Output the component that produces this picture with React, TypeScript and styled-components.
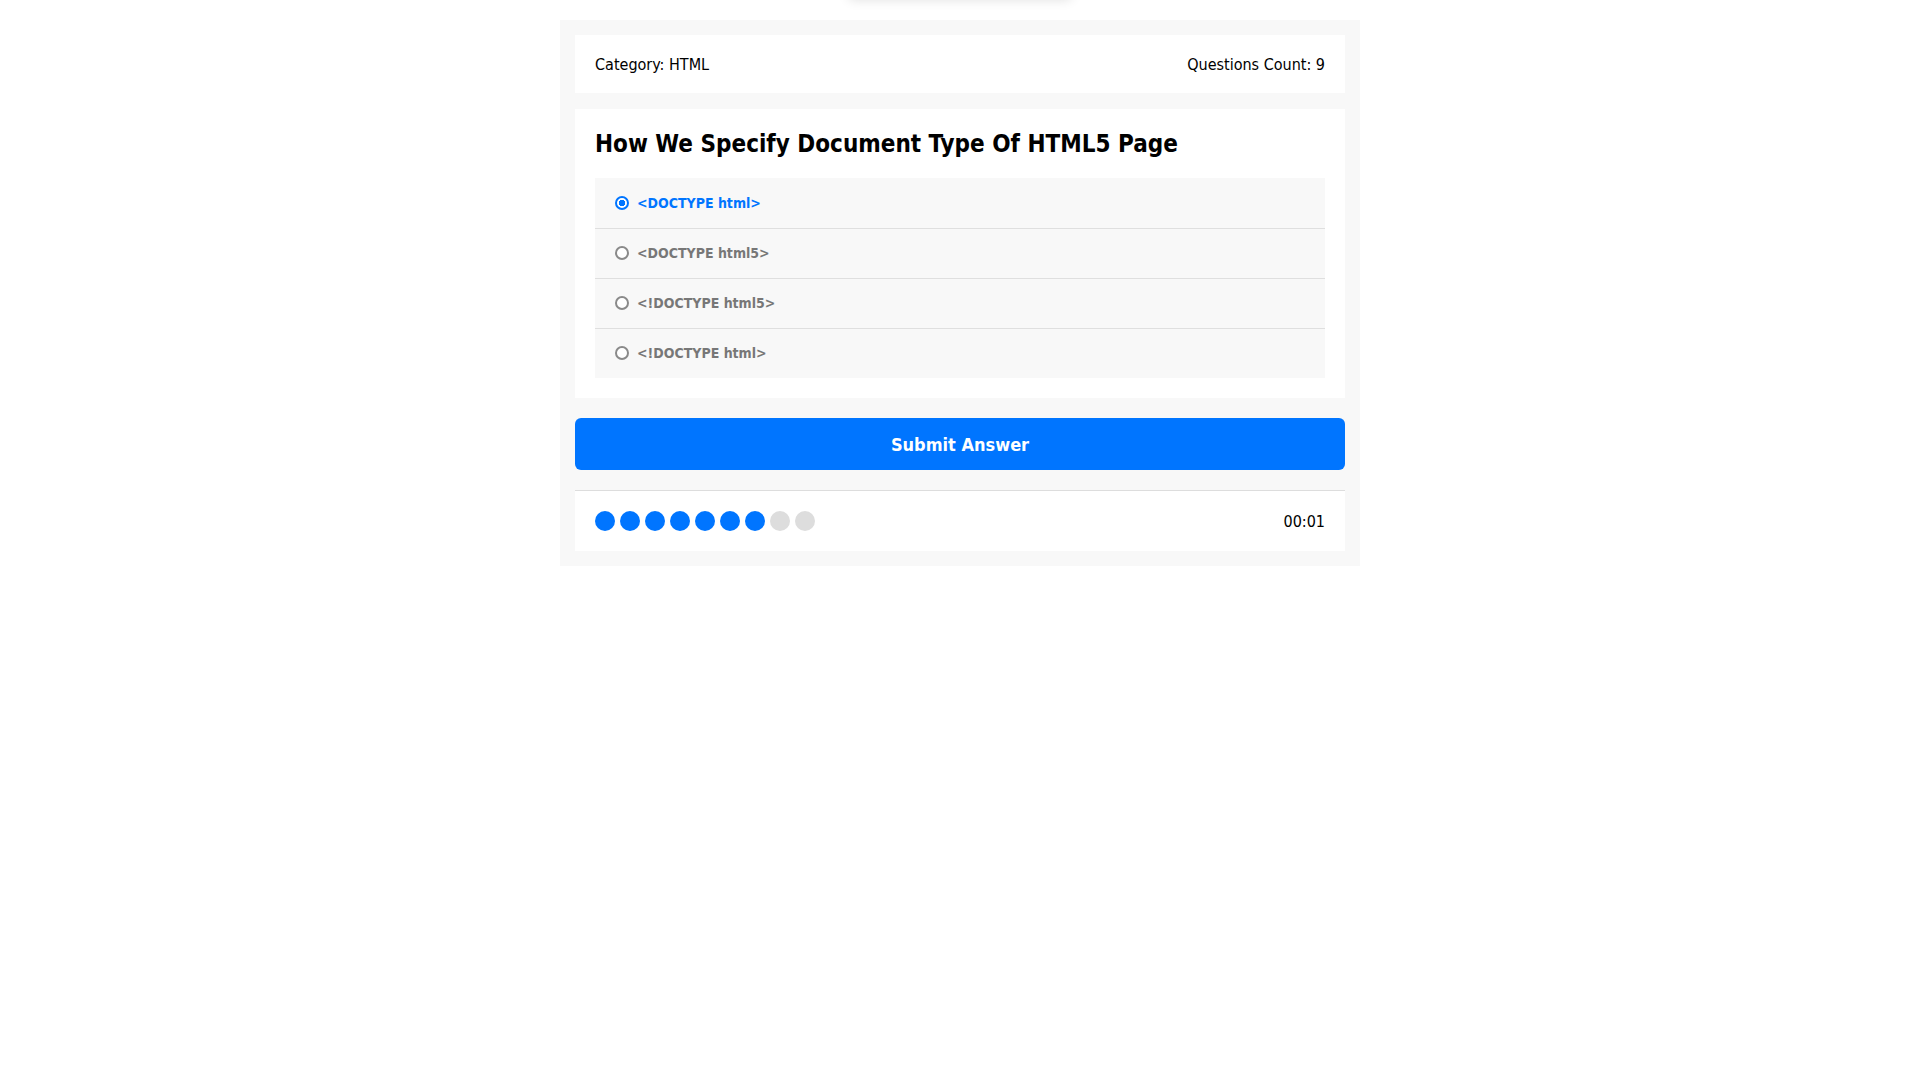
import React from "react";
import styled, { createGlobalStyle } from "styled-components";

const Global = createGlobalStyle`
  * { box-sizing: border-box; }
  body {
    margin: 0;
    background: #ffffff;
    font-family: "DejaVu Sans Condensed", "DejaVu Sans", Tahoma, sans-serif;
  }
`;

const Toast = styled.div`
  position: fixed;
  top: -60px;
  left: 50%;
  transform: translateX(-50%);
  width: 224px;
  height: 60px;
  background: #fff;
  border-radius: 6px;
  box-shadow: 0 0 12px rgba(0, 0, 0, 0.12);
`;

const Container = styled.div`
  width: 800px;
  margin: 20px auto 0;
  background: #f8f8f8;
  padding: 15px;
  display: flex;
  flex-direction: column;
`;

const InfoBar = styled.div`
  background: #fff;
  padding: 21px 20px 19px;
  display: flex;
  justify-content: space-between;
  align-items: center;
  font-size: 16px;
  line-height: 18px;
  color: #000;
`;

const QuestionCard = styled.div`
  background: #fff;
  padding: 20px;
  margin-top: 16px;
`;

const Title = styled.h2`
  margin: 0 0 20px;
  padding-top: 1px;
  font-size: 24px;
  line-height: 28px;
  font-weight: bold;
  color: #000;
`;

const Options = styled.div`
  background: #f8f8f8;
  display: flex;
  flex-direction: column;
`;

const Option = styled.label<{ $checked?: boolean; $first?: boolean }>`
  display: flex;
  align-items: center;
  height: 50px;
  padding: 0 20px 1px;
  font-size: 14px;
  font-weight: bold;
  color: ${(p) => (p.$checked ? "#0075ff" : "#777")};
  border-top: 1px solid ${(p) => (p.$first ? "transparent" : "#dfdfdf")};
  cursor: pointer;
`;

const Radio = styled.input`
  appearance: none;
  margin: 0 8px 0 0;
  width: 14px;
  height: 14px;
  border-radius: 50%;
  border: 2px solid #8a8a8a;
  background: #fff;
  flex-shrink: 0;
  &:checked {
    border-color: #0075ff;
    background: radial-gradient(circle, #0075ff 0 3px, #fff 3.5px);
  }
`;

const SubmitButton = styled.button`
  margin-top: 20px;
  height: 52px;
  width: 100%;
  border: none;
  border-radius: 6px;
  background: #0075ff;
  color: #fff;
  font-family: inherit;
  font-size: 18px;
  font-weight: bold;
  cursor: pointer;
`;

const BottomBar = styled.div`
  margin-top: 20px;
  background: #fff;
  border-top: 1px solid #ddd;
  padding: 20px;
  display: flex;
  justify-content: space-between;
  align-items: center;
`;

const Bullets = styled.div`
  display: flex;
  gap: 5px;
`;

const Bullet = styled.span<{ $on?: boolean }>`
  width: 20px;
  height: 20px;
  border-radius: 50%;
  background: ${(p) => (p.$on ? "#0075ff" : "#ddd")};
`;

const Timer = styled.div`
  font-size: 16px;
  color: #000;
`;

const answers = ["<DOCTYPE html>", "<DOCTYPE html5>", "<!DOCTYPE html5>", "<!DOCTYPE html>"];

export default function App() {
  const [checked, setChecked] = React.useState(0);
  return (
    <>
      <Global />
      <Toast />
      <Container>
        <InfoBar>
          <span>Category: HTML</span>
          <span>Questions Count: 9</span>
        </InfoBar>
        <QuestionCard>
          <Title>How We Specify Document Type Of HTML5 Page</Title>
          <Options>
            {answers.map((a, i) => (
              <Option key={a} $checked={checked === i} $first={i === 0}>
                <Radio type="radio" name="q" checked={checked === i} onChange={() => setChecked(i)} />
                {a}
              </Option>
            ))}
          </Options>
        </QuestionCard>
        <SubmitButton>Submit Answer</SubmitButton>
        <BottomBar>
          <Bullets>
            {Array.from({ length: 9 }).map((_, i) => (
              <Bullet key={i} $on={i < 7} />
            ))}
          </Bullets>
          <Timer>00:01</Timer>
        </BottomBar>
      </Container>
    </>
  );
}
